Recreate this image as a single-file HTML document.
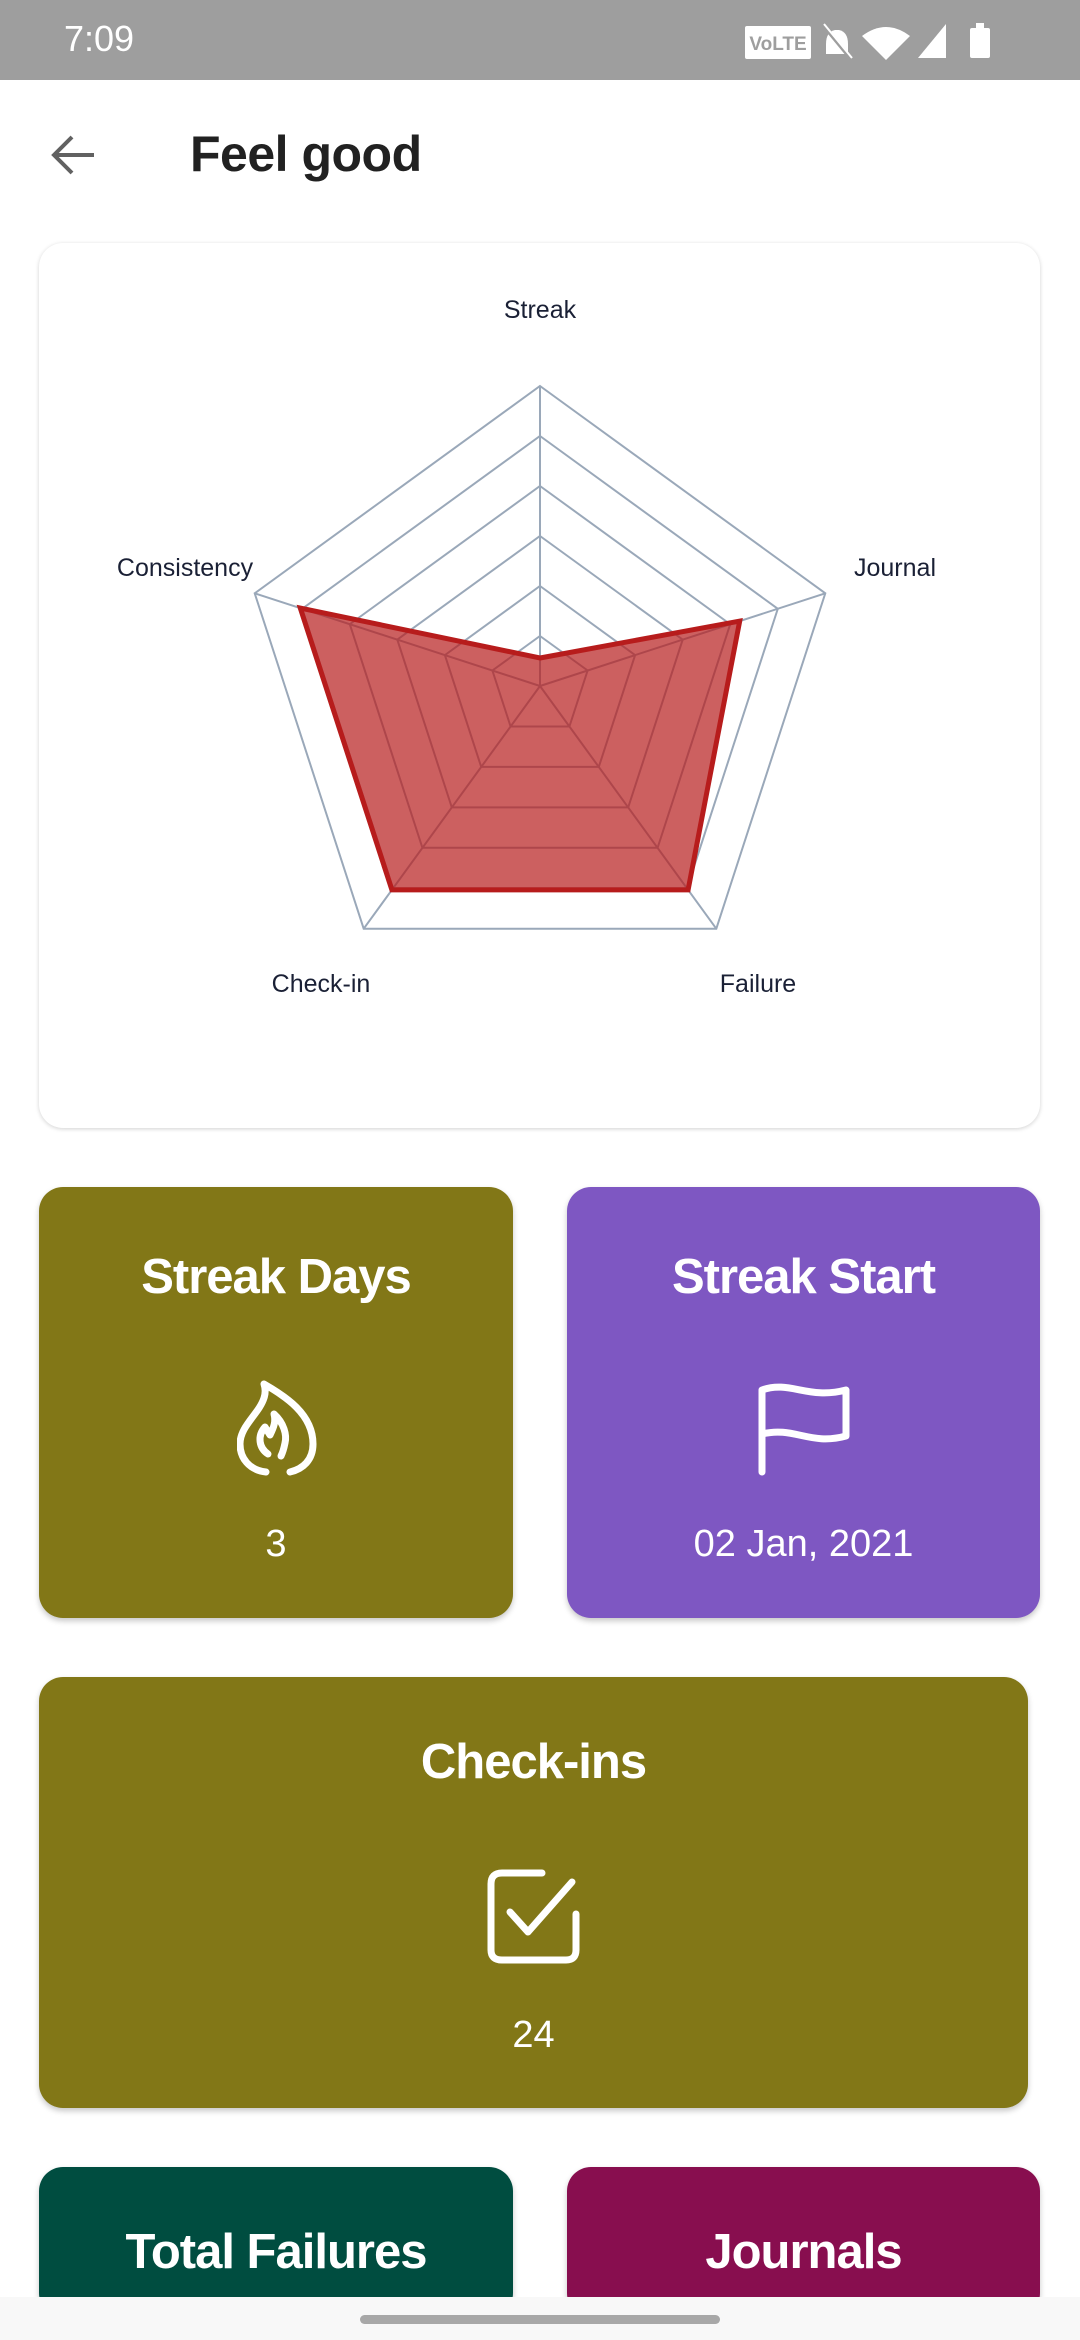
<!DOCTYPE html>
<html style="width:1080px;height:2340px;overflow:hidden"><head><meta charset="utf-8"><style>
*{margin:0;padding:0;box-sizing:border-box}
body{width:1080px;height:2340px;background:#fff;position:relative;overflow:hidden;font-family:"Liberation Sans",sans-serif}
.abs{position:absolute}
.card{position:absolute;border-radius:24px;box-shadow:0 3px 6px rgba(0,0,0,0.22);color:#fff;text-align:center}
.t{position:absolute;left:0;right:0;font-weight:bold;font-size:49px;letter-spacing:-1px;line-height:60px}
.n{position:absolute;left:0;right:0;font-size:38px;line-height:50px}
</style></head><body>
<div class="abs" style="left:0;top:0;width:1080px;height:80px;background:#9e9e9e"></div>
<div class="abs" style="left:64px;top:16px;font-size:36px;color:#fff;line-height:46px">7:09</div>
<svg class="abs" style="left:740px;top:18px" width="300" height="44" viewBox="0 0 300 44">
<rect x="5" y="8" width="66" height="33" rx="2" fill="#fff"/>
<text x="38" y="32" font-size="19" font-weight="bold" fill="#9e9e9e" text-anchor="middle" font-family="Liberation Sans">VoLTE</text>
<path d="M95 12 Q86 14 86 26 V36 H108 V26 Q108 14 99 12 Z" fill="#fff"/><path d="M84 8 L112 42" stroke="#9e9e9e" stroke-width="4"/><path d="M84 6 L112 40" stroke="#fff" stroke-width="2"/>
<path d="M122 18 Q146 0 170 18 L146 42 Z" fill="#fff"/>
<path d="M178 40 L206 6 V40 Z" fill="#fff"/>
<rect x="230" y="10" width="20" height="30" rx="2" fill="#fff"/><rect x="236" y="5" width="8" height="5" fill="#fff"/>
</svg>
<svg class="abs" style="left:50px;top:132px" width="48" height="46" viewBox="0 0 48 46"><path d="M44 23 H6 M22 5 L4 23 L22 41" stroke="#616161" stroke-width="4" fill="none"/></svg>
<div class="abs" style="left:190px;top:124px;font-size:50px;font-weight:bold;color:#212121;line-height:60px;letter-spacing:-0.5px">Feel good</div>

<div class="card" style="left:39px;top:243px;width:1001px;height:885px;background:#fff;box-shadow:0 1px 4px rgba(0,0,0,0.18)"></div>
<svg class="abs" style="left:0;top:0" width="1080" height="1130" viewBox="0 0 1080 1130" font-family="Liberation Sans" font-size="25" fill="#1a2035">
<g fill="none" stroke="#9aa8b9" stroke-width="2">
<polygon points="540,636 587.6,670.5 569.4,726.5 510.6,726.5 492.4,670.5"/>
<polygon points="540,586 635.1,655.1 598.8,766.9 481.2,766.9 444.9,655.1"/>
<polygon points="540,536 682.7,639.6 628.2,807.4 451.8,807.4 397.3,639.6"/>
<polygon points="540,486 730.2,624.2 657.6,847.8 422.4,847.8 349.8,624.2"/>
<polygon points="540,436 777.8,608.8 687,888.2 393,888.2 302.2,608.8"/>
<polygon points="540,386 825.3,593.3 716.3,928.7 363.7,928.7 254.7,593.3"/>
<path d="M540 686 L540 386 M540 686 L825.3 593.3 M540 686 L716.3 928.7 M540 686 L363.7 928.7 M540 686 L254.7 593.3"/>
</g>
<polygon points="540,658 739.7,621.1 688.1,889.9 391.9,889.9 300.3,608.1" fill="#b71c1c" fill-opacity="0.7"/>
<polygon points="540,658 739.7,621.1 688.1,889.9 391.9,889.9 300.3,608.1" fill="none" stroke="#b71c1c" stroke-width="5"/>
<g fill="#1a2035">
<text x="540" y="318" text-anchor="middle">Streak</text>
<text x="895" y="576" text-anchor="middle">Journal</text>
<text x="185" y="576" text-anchor="middle">Consistency</text>
<text x="321" y="992" text-anchor="middle">Check-in</text>
<text x="758" y="992" text-anchor="middle">Failure</text>
</g>
</svg>

<div class="card" style="left:39px;top:1187px;width:474px;height:431px;background:#827717">
<div class="t" style="top:60px">Streak Days</div>
<svg class="abs" style="left:198px;top:193px" width="80" height="96" viewBox="0 0 80 96" fill="none" stroke="#fff" stroke-width="7" stroke-linecap="round" stroke-linejoin="round">
<path d="M29 92 C12 90 3 78 3 64 C3 46 22 34 27 18 C29 12 28 7 27 4 C48 16 76 34 76 64 C76 80 66 89 53 92"/>
<path d="M31 74 C22 68 20 56 28 47 L33 55 C37 47 39 41 37 34 C47 43 50 55 48 63 C47 68 46 72 44 76"/>
</svg>
<div class="n" style="top:332px">3</div>
</div>
<div class="card" style="left:567px;top:1187px;width:473px;height:431px;background:#7e57c2">
<div class="t" style="top:60px">Streak Start</div>
<svg class="abs" style="left:189px;top:193px" width="96" height="96" viewBox="0 0 96 96" fill="none" stroke="#fff" stroke-width="7" stroke-linecap="round" stroke-linejoin="round">
<path d="M6 92 V10 C34 0 52 20 90 10 V56 C54 66 38 46 6 54"/>
</svg>
<div class="n" style="top:332px">02 Jan, 2021</div>
</div>

<div class="card" style="left:39px;top:1677px;width:989px;height:431px;background:#827717">
<div class="t" style="top:55px">Check-ins</div>
<svg class="abs" style="left:447px;top:191px" width="96" height="96" viewBox="0 0 96 96" fill="none" stroke="#fff" stroke-width="7" stroke-linecap="round" stroke-linejoin="round">
<path d="M56 5 H16 Q5 5 5 16 V82 Q5 92 16 92 H80 Q90 92 90 82 V46"/>
<path d="M24 44 L42 64 L86 14"/>
</svg>
<div class="n" style="top:333px">24</div>
</div>

<div class="card" style="left:39px;top:2167px;width:474px;height:150px;background:#004d40">
<div class="t" style="top:55px">Total Failures</div>
</div>
<div class="card" style="left:567px;top:2167px;width:473px;height:150px;background:#880e4f">
<div class="t" style="top:55px">Journals</div>
</div>

<div class="abs" style="left:0;top:2297px;width:1080px;height:43px;background:#f8f8f8"></div>
<div class="abs" style="left:360px;top:2315px;width:360px;height:9px;border-radius:5px;background:#a8a8a8"></div>
</body></html>
